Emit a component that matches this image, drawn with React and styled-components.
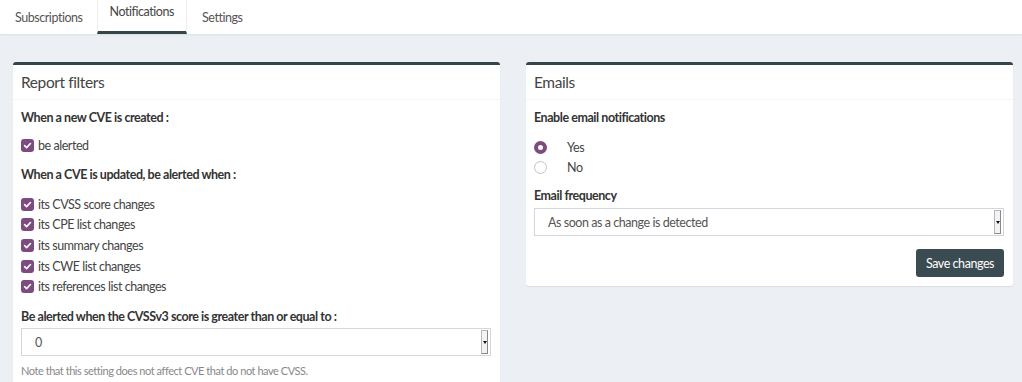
import React from "react";
import styled, { createGlobalStyle } from "styled-components";

const Global = createGlobalStyle`
  html, body { margin: 0; padding: 0; }
  body {
    background: #ecf0f5;
    font-family: Lato, "Liberation Sans", sans-serif;
    font-size: 12.5px;
    letter-spacing: -0.45px;
    color: #333;
  }
  * { box-sizing: border-box; }
`;

const Page = styled.div`
  width: 1022px;
  height: 382px;
  overflow: hidden;
  background: #ecf0f5;
`;

const TabBar = styled.nav`
  display: flex;
  align-items: stretch;
  height: 34px;
  background: #fff;
  box-shadow: 0 1px 2px rgba(0, 0, 0, 0.08);
`;

const Tab = styled.div`
  display: flex;
  align-items: center;
  padding: ${(p) => (p.$active ? "0 12px 8px 12px" : "3px 13px 0 14px")};
  font-size: 12.5px;
  color: ${(p) => (p.$active ? "#444" : "#555")};
  border-left: 1px solid ${(p) => (p.$active ? "#eee" : "transparent")};
  border-right: 1px solid ${(p) => (p.$active ? "#eee" : "transparent")};
  border-bottom: 3px solid ${(p) => (p.$active ? "#34454c" : "transparent")};
`;

const Content = styled.main`
  display: grid;
  grid-template-columns: 487px 487px;
  column-gap: 26px;
  align-items: start;
  padding: 28px 9px 0 13px;
`;

const Box = styled.section`
  background: #fff;
  border-top: 3px solid #34454c;
  border-radius: 3px;
  box-shadow: 0 1px 1px rgba(0, 0, 0, 0.08);
`;

const BoxHeader = styled.header`
  height: 35px;
  display: flex;
  align-items: center;
  padding: 0 8px;
  border-bottom: 1px solid #f4f4f4;
  font-size: 15.5px;
  letter-spacing: -0.4px;
  color: #444;
`;

const BoxBody = styled.div`
  padding: 10px 9px ${(p) => p.$pb || "8px"} 8px;
`;

const Label = styled.div`
  font-weight: 700;
  font-size: 12.5px;
  color: #333;
  line-height: 16px;
  margin: ${(p) => p.$m || "0"};
`;

const CheckRow = styled.div`
  display: flex;
  align-items: center;
  gap: 4px;
  height: 20.7px;
  color: #444;
`;

const CheckBoxMark = styled.span`
  width: 13px;
  height: 13px;
  border-radius: 3px;
  background: #7d4b80;
  display: inline-flex;
  align-items: center;
  justify-content: center;
  flex: none;
`;

const Checkbox = () => (
  <CheckBoxMark>
    <svg width="9" height="9" viewBox="0 0 10 10">
      <path d="M1.8 5.2 L4 7.3 L8.3 2.8" fill="none" stroke="#fff" strokeWidth="1.8" strokeLinecap="round" strokeLinejoin="round" />
    </svg>
  </CheckBoxMark>
);

const CheckList = styled.div`
  display: flex;
  flex-direction: column;
  margin: ${(p) => p.$m || "0"};
`;

const SelectBox = styled.div`
  height: 28px;
  border: 1px solid #d2d6de;
  display: flex;
  align-items: center;
  justify-content: space-between;
  padding-left: 13px;
  padding-right: 2px;
  color: #555;
  margin: ${(p) => p.$m || "0"};
`;

const Spinner = styled.span`
  width: 7px;
  height: 24px;
  border: 1px solid #b8b8b8;
  border-right-color: #888;
  border-bottom-color: #888;
  background: #f3f3f3;
  display: flex;
  align-items: center;
  justify-content: center;
`;

const Arrow = styled.span`
  width: 0;
  height: 0;
  border-left: 2.5px solid transparent;
  border-right: 2.5px solid transparent;
  border-top: 3px solid #111;
`;

const Note = styled.div`
  font-size: 11px;
  color: #888;
  margin-top: 8px;
`;

const RadioRow = styled.div`
  display: flex;
  align-items: center;
  height: 20px;
  color: #444;
`;

const RadioDot = styled.span`
  width: 13px;
  height: 13px;
  border-radius: 50%;
  border: ${(p) => (p.$on ? "4px solid #7d4b80" : "1px solid #c4c4c4")};
  background: #fff;
  margin-right: 20px;
  flex: none;
`;

const RadioGroup = styled.div`
  display: flex;
  flex-direction: column;
  margin: ${(p) => p.$m || "0"};
`;

const Actions = styled.div`
  display: flex;
  justify-content: flex-end;
  margin-top: 13px;
`;

const Button = styled.button`
  height: 28px;
  padding: 0 10px;
  border: none;
  border-radius: 3px;
  background: #3b4b52;
  color: #fff;
  font-family: inherit;
  font-size: 12.5px;
  letter-spacing: -0.45px;
`;

const checks = [
  "its CVSS score changes",
  "its CPE list changes",
  "its summary changes",
  "its CWE list changes",
  "its references list changes",
];

export default function App() {
  return (
    <Page>
      <Global />
      <TabBar>
        <Tab>Subscriptions</Tab>
        <Tab $active>Notifications</Tab>
        <Tab>Settings</Tab>
      </TabBar>
      <Content>
        <Box>
          <BoxHeader>Report filters</BoxHeader>
          <BoxBody>
            <Label>When a new CVE is created :</Label>
            <CheckList $m="9px 0 0 0">
              <CheckRow>
                <Checkbox />
                be alerted
              </CheckRow>
            </CheckList>
            <Label $m="11px 0 0 0">When a CVE is updated, be alerted when :</Label>
            <CheckList $m="11px 0 0 0">
              {checks.map((c) => (
                <CheckRow key={c}>
                  <Checkbox />
                  {c}
                </CheckRow>
              ))}
            </CheckList>
            <Label $m="12px 0 0 0">Be alerted when the CVSSv3 score is greater than or equal to :</Label>
            <SelectBox $m="3px 0 0 0">
              0
              <Spinner>
                <Arrow />
              </Spinner>
            </SelectBox>
            <Note>Note that this setting does not affect CVE that do not have CVSS.</Note>
          </BoxBody>
        </Box>
        <Box>
          <BoxHeader>Emails</BoxHeader>
          <BoxBody $pb="9px">
            <Label>Enable email notifications</Label>
            <RadioGroup $m="11px 0 0 0">
              <RadioRow>
                <RadioDot $on />
                Yes
              </RadioRow>
              <RadioRow>
                <RadioDot />
                No
              </RadioRow>
            </RadioGroup>
            <Label $m="11px 0 0 0">Email frequency</Label>
            <SelectBox $m="4px 0 0 0">
              As soon as a change is detected
              <Spinner>
                <Arrow />
              </Spinner>
            </SelectBox>
            <Actions>
              <Button>Save changes</Button>
            </Actions>
          </BoxBody>
        </Box>
      </Content>
    </Page>
  );
}
